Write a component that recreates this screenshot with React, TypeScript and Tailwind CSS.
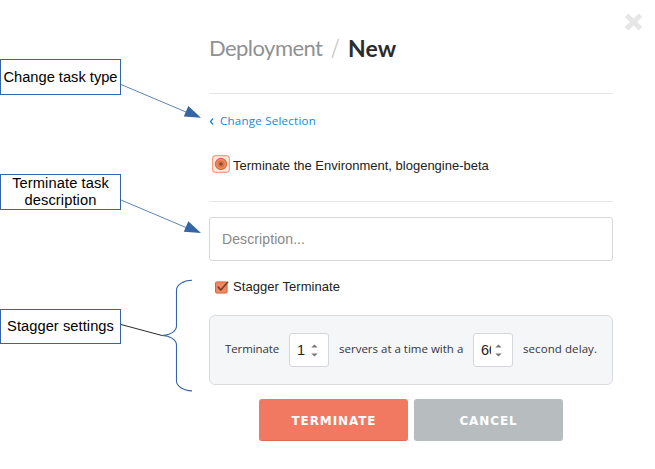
import React from "react";

const sans = "font-['Liberation_Sans',sans-serif]";

function Callout({ children, className }: { children: React.ReactNode; className: string }) {
  return (
    <div className={`flex w-[121px] items-center justify-center border border-[#3465a4] bg-white text-center text-[14.67px] leading-[17px] whitespace-nowrap text-black ${sans} ${className}`}>
      {children}
    </div>
  );
}

function Stepper({ value }: { value: string }) {
  return (
    <div className="flex h-[34px] w-[40px] shrink-0 items-center rounded-[3px] border border-[#d5d7da] bg-white pl-[7px]">
      <input
        readOnly
        defaultValue={value}
        className={`w-[10px] bg-transparent p-0 text-[14.5px] leading-[18px] text-[#222] outline-none ${sans}`}
      />
      <svg className="ml-[4px]" width="7" height="13" viewBox="0 0 7 13">
        <path d="M0.3 3.6 3.5 0.4 6.7 3.6ZM0.3 9.4 3.5 12.6 6.7 9.4Z" fill="#77797b" />
      </svg>
    </div>
  );
}

export default function App() {
  return (
    <div className="relative flex h-[469px] w-[655px] overflow-hidden bg-white">
      <aside className="flex w-[209px] shrink-0 flex-col pt-[59px]">
        <Callout className="h-[36px]">Change task type</Callout>
        <Callout className="mt-[79px] h-[36px] pb-[1px] tracking-[0.1px]">
          <span>Terminate task<br />description</span>
        </Callout>
        <Callout className="mt-[99px] h-[35px] pb-[1px] tracking-[0.06px]">Stagger settings</Callout>
      </aside>

      <main className="flex w-[404px] shrink-0 flex-col">
        <h1 className="flex h-[94px] items-start border-b border-[#e5e6e7] pt-[34px] font-['Lato',sans-serif] text-[22px] leading-[28px] whitespace-nowrap">
          <span className="w-[122px] tracking-[-0.55px] text-[#8f9194]">Deployment</span>
          <svg className="mt-[4px]" width="9" height="21" viewBox="0 0 9 21">
            <path d="M1 20 7.5 1" stroke="#cccdd0" strokeWidth="1.5" fill="none" />
          </svg>
          <span className="ml-[8px] text-[23px] font-bold tracking-[0.1px] text-[#2a2c2e]">New</span>
        </h1>

        <a className="mt-[18px] flex h-[18px] items-center whitespace-nowrap text-[#1a85d6]">
          <svg width="11" height="8" viewBox="0 0 11 8">
            <path d="M4 1.500 1.5 4.500 4 7.500" stroke="currentColor" strokeWidth="1.3" fill="none" />
          </svg>
          <span className="font-['Open_Sans',sans-serif] text-[11.5px] tracking-[0.25px]">Change Selection</span>
        </a>

        <div className={`mt-[25px] flex h-[47px] items-start border-b border-[#e5e6e7] pl-[3px] ${sans}`}>
          <svg width="18" height="18" viewBox="0 0 18 18">
            <rect x=".6" y=".6" width="16.8" height="16.8" rx="3.5" fill="#fde8df" stroke="#f3a283" strokeWidth="1.2" />
            <circle cx="9" cy="9" r="5.6" fill="#f58a5c" stroke="#cd6a45" strokeWidth="1.1" />
            <circle cx="9" cy="9" r="3.2" fill="#e57a50" stroke="#d46c44" strokeWidth=".6" />
            <circle cx="9" cy="9" r="1.8" fill="#7f4e3b" />
          </svg>
          <span className="ml-[3px] pt-[2px] text-[13px] leading-[18px] whitespace-nowrap text-[#222]">Terminate the Environment, blogengine-beta</span>
        </div>

        <div className={`mt-[15px] flex h-[44px] items-center rounded-[3px] border border-[#d5d7d9] px-[12px] text-[14px] tracking-[0.1px] text-[#888] ${sans}`}>
          Description...
        </div>

        <label className={`mt-[17px] flex h-[18px] items-center pl-[6px] text-[13px] tracking-[0.06px] text-[#222] ${sans}`}>
          <svg width="14" height="13" viewBox="0 0 14 13">
            <rect x=".5" y=".9" width="11.6" height="11.2" rx="1.2" fill="#f4875e" stroke="#cf6a47" />
            <path d="M2.800 5.600 5.800 9 13 .8" fill="none" stroke="#70432f" strokeWidth="1.6" />
          </svg>
          <span className="ml-[4px]">Stagger Terminate</span>
        </label>

        <section className="mt-[19px] flex h-[70px] items-center rounded-[6px] border border-[#d9dbde] bg-[#f5f6f8] pl-[15px] font-['Open_Sans',sans-serif] text-[11.5px] whitespace-nowrap text-[#34373d]">
          <span className="w-[64px] pb-[2px] tracking-[-0.1px]">Terminate</span>
          <Stepper value="1" />
          <span className="ml-[10px] w-[134px] pb-[2px]">servers at a time with a</span>
          <Stepper value="60" />
          <span className="ml-[10px] pb-[2px] tracking-[0.08px]">second delay.</span>
        </section>

        <div className="mt-[14px] flex gap-[6px] pl-[50px] font-['DejaVu_Sans',sans-serif] text-[12px] font-bold tracking-[0.9px] text-white">
          <button className="h-[42px] w-[149px] rounded-[3px] border-b border-[#dd6a54] bg-[#f27961] pt-[2px] pl-[1px]">TERMINATE</button>
          <button className="h-[42px] w-[149px] rounded-[3px] bg-[#b7bdbf] pt-[1px]">CANCEL</button>
        </div>
      </main>

      <svg className="absolute top-[14px] right-[13px]" width="17" height="16" viewBox="0 0 17 16">
        <path d="M3.300 3 13.700 13M13.700 3 3.300 13" stroke="#e6e6e6" strokeWidth="5" strokeLinecap="square" strokeLinejoin="round" />
      </svg>

      <svg className="pointer-events-none absolute inset-0" width="209" height="469" viewBox="0 0 209 469" fill="none">
        <g stroke="#3465a4" strokeWidth=".8">
          <path d="M121 84.5 186 112M121 200 186 227.500" />
          <path d="M192 280.300C183 280.500 176.500 285 176.500 290V326C176.500 331 170 335.500 162 335.500C170 335.500 176.500 340 176.500 345V381C176.500 386 183 390.700 192 390.900" strokeWidth="1.100" />
        </g>
        <path d="M188.300 106 201 117.700 183.800 116.600ZM188.300 221.200 201 232.900 183.800 231.800Z" fill="#3465a4" />
        <path d="M121 324.500 162 335.500" stroke="#111" strokeWidth=".9" />
      </svg>
    </div>
  );
}
